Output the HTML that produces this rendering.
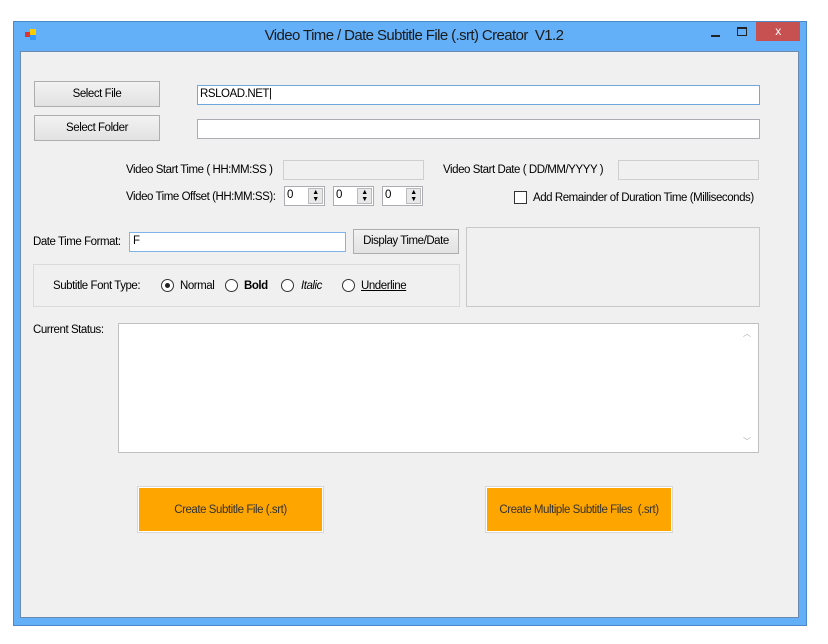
<!DOCTYPE html><html><head><style>
*{margin:0;padding:0;box-sizing:border-box}
body{width:828px;height:644px;background:#fff;position:relative;font-family:"Liberation Sans",sans-serif;font-size:11.5px;color:#000;overflow:hidden;letter-spacing:-0.45px}
.a{position:absolute}
.frame{left:13px;top:21px;width:794px;height:605px;background:#63b0f8;border:1px solid #4a88c8}
.client{left:20px;top:51px;width:779px;height:567px;background:#f0f0f0;border:1px solid #6a8ab0}
.btn{background:linear-gradient(#f2f2f2,#e2e2e2);border:1px solid #adadad;text-align:center}
.tb{background:#fff;border:1px solid #abadb3}
.dis{background:#f0f0f0;border:1px solid #cfcfcf}
.spin{width:41px;height:20px;background:#fff;border:1px solid #abadb3}
.spin span{position:absolute;left:2px;top:2px}
.spin i{position:absolute;right:1px;top:1px;width:15px;height:16px;background:#e8e8e8;border:1px solid #bbb;font-style:normal;font-size:7px;line-height:7px;text-align:center}
.rad{width:13px;height:13px;border-radius:50%;border:1px solid #333;background:#fff}
.orange{background:#ffa500;border:1px solid #fff;outline:1px solid #d8d8d8;text-align:center;color:#333}
</style></head><body>
<div class="a frame"></div>
<div class="a" style="left:25px;top:29px;width:12px;height:12px">
<div class="a" style="left:0;top:3px;width:5px;height:5px;background:#d33"></div><div class="a" style="left:5px;top:0;width:6px;height:6px;background:#fc0"></div><div class="a" style="left:5px;top:6px;width:6px;height:5px;background:#39f"></div></div>
<div class="a" style="left:0;width:828px;top:27px;text-align:center;font-size:15px;color:#1a1a1a;letter-spacing:-0.6px">Video Time / Date Subtitle File (.srt) Creator&nbsp; V1.2</div>
<div class="a" style="left:711px;top:35px;width:9px;height:2px;background:#222"></div>
<div class="a" style="left:737px;top:27px;width:10px;height:9px;border:1px solid #222;border-top-width:2px"></div>
<div class="a" style="left:756px;top:22px;width:44px;height:19px;background:#c75050;color:#fff;text-align:center;font-size:12px;line-height:19px">x</div>
<div class="a client"></div>

<div class="a btn" style="left:34px;top:81px;width:126px;height:26px;line-height:24px">Select File</div>
<div class="a btn" style="left:34px;top:115px;width:126px;height:26px;line-height:24px">Select Folder</div>
<div class="a tb" style="left:197px;top:85px;width:563px;height:20px;border-color:#6fa8dc;padding:2px 2px">RSLOAD.NET|</div>
<div class="a tb" style="left:197px;top:119px;width:563px;height:20px"></div>

<div class="a" style="left:126px;top:164px">Video Start Time ( HH:MM:SS )</div>
<div class="a dis" style="left:283px;top:160px;width:141px;height:20px"></div>
<div class="a" style="left:443px;top:164px">Video Start Date ( DD/MM/YYYY )</div>
<div class="a dis" style="left:618px;top:160px;width:141px;height:20px"></div>
<div class="a" style="left:126px;top:191px">Video Time Offset (HH:MM:SS):</div>
<div class="a spin" style="left:284px;top:186px"><span>0</span><i>▲<br>▼</i></div>
<div class="a spin" style="left:333px;top:186px"><span>0</span><i>▲<br>▼</i></div>
<div class="a spin" style="left:382px;top:186px"><span>0</span><i>▲<br>▼</i></div>
<div class="a" style="left:514px;top:191px;width:13px;height:13px;border:1px solid #333;background:#fff"></div>
<div class="a" style="left:533px;top:192px">Add Remainder of Duration Time (Milliseconds)</div>

<div class="a" style="left:33px;top:236px">Date Time Format:</div>
<div class="a tb" style="left:129px;top:232px;width:217px;height:20px;border-color:#7eb4ea;padding:2px 3px">F</div>
<div class="a btn" style="left:353px;top:229px;width:106px;height:25px;line-height:23px">Display Time/Date</div>
<div class="a" style="left:466px;top:227px;width:294px;height:80px;border:1px solid #c8c8c8"></div>
<div class="a" style="left:33px;top:264px;width:427px;height:43px;border:1px solid #dadada"></div>
<div class="a" style="left:53px;top:280px">Subtitle Font Type:</div>
<div class="a rad" style="left:161px;top:279px"><div class="a" style="left:3px;top:3px;width:5px;height:5px;border-radius:50%;background:#222"></div></div>
<div class="a" style="left:180px;top:280px">Normal</div>
<div class="a rad" style="left:225px;top:279px"></div>
<div class="a" style="left:244px;top:280px;font-weight:bold">Bold</div>
<div class="a rad" style="left:281px;top:279px"></div>
<div class="a" style="left:301px;top:280px;font-style:italic">Italic</div>
<div class="a rad" style="left:342px;top:279px"></div>
<div class="a" style="left:361px;top:280px;text-decoration:underline">Underline</div>

<div class="a" style="left:33px;top:324px">Current Status:</div>
<div class="a tb" style="left:118px;top:323px;width:641px;height:130px;border-color:#c0c0c0"></div>
<div class="a" style="left:743px;top:328px;font-size:8px;color:#aaa">︿</div>
<div class="a" style="left:743px;top:436px;font-size:8px;color:#aaa">﹀</div>

<div class="a orange" style="left:138px;top:487px;width:185px;height:45px;line-height:45px">Create Subtitle File (.srt)</div>
<div class="a orange" style="left:486px;top:487px;width:186px;height:45px;line-height:45px">Create Multiple Subtitle Files&nbsp; (.srt)</div>
</body></html>
